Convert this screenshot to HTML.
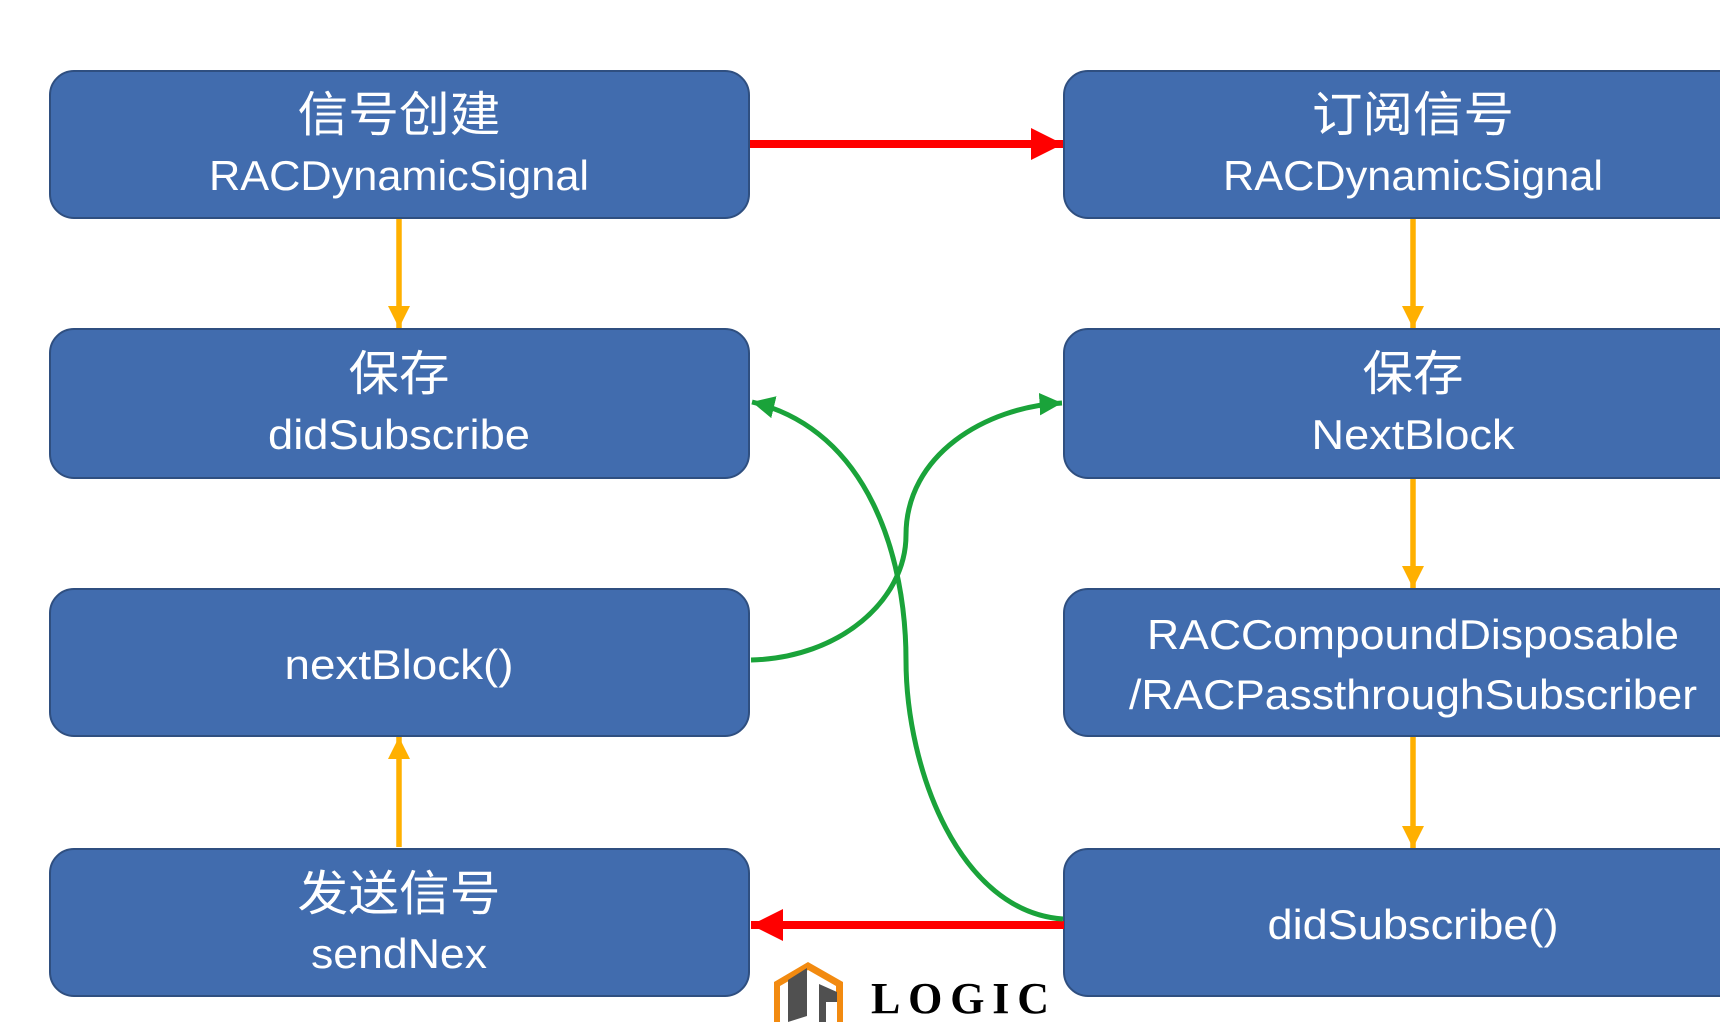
<!DOCTYPE html>
<html><head><meta charset="utf-8"><style>
html,body{margin:0;padding:0;background:#fff;width:1720px;height:1022px;overflow:hidden}
svg{display:block}
text{fill:#fff;font-family:"Liberation Sans","Noto Sans CJK SC",sans-serif;text-anchor:middle}
.c{font-size:48px}
.l{font-size:42px}
</style></head><body>
<svg width="1720" height="1022" viewBox="0 0 1720 1022" xmlns="http://www.w3.org/2000/svg">
<defs>
<marker id="ro" markerWidth="4" markerHeight="4" refX="4" refY="2" orient="auto" markerUnits="strokeWidth"><path d="M0,0 L4,2 L0,4 z" fill="#ff0000"/></marker>
<marker id="yo" markerWidth="4" markerHeight="4" refX="4" refY="2" orient="auto" markerUnits="strokeWidth"><path d="M0,0 L4,2 L0,4 z" fill="#ffb000"/></marker>
<marker id="go" markerWidth="4.5" markerHeight="4.5" refX="4.5" refY="2.25" orient="auto" markerUnits="strokeWidth"><path d="M0,0 L4.5,2.25 L0,4.5 z" fill="#1aa33a"/></marker>
</defs>
<g fill="#416cae" stroke="#2f4f80" stroke-width="2">
<rect x="50" y="71" width="699" height="147" rx="24"/>
<rect x="50" y="329" width="699" height="149" rx="24"/>
<rect x="50" y="589" width="699" height="147" rx="24"/>
<rect x="50" y="849" width="699" height="147" rx="24"/>
<rect x="1064" y="71" width="700" height="147" rx="24"/>
<rect x="1064" y="329" width="700" height="149" rx="24"/>
<rect x="1064" y="589" width="700" height="147" rx="24"/>
<rect x="1064" y="849" width="700" height="147" rx="24"/>
</g>
<line x1="750" y1="144" x2="1063" y2="144" stroke="#ff0000" stroke-width="8" marker-end="url(#ro)"/>
<line x1="1064" y1="925" x2="751" y2="925" stroke="#ff0000" stroke-width="8" marker-end="url(#ro)"/>
<g stroke="#ffb000" stroke-width="5.5">
<line x1="399" y1="219" x2="399" y2="328" marker-end="url(#yo)"/>
<line x1="1413" y1="219" x2="1413" y2="328" marker-end="url(#yo)"/>
<line x1="1413" y1="479" x2="1413" y2="588" marker-end="url(#yo)"/>
<line x1="1413" y1="737" x2="1413" y2="848" marker-end="url(#yo)"/>
<line x1="399" y1="847" x2="399" y2="737" marker-end="url(#yo)"/>
</g>
<g stroke="#1aa33a" stroke-width="5" fill="none">
<path d="M751,660 C840,658 906,600 906,535 C906,455 985,407 1062,403" marker-end="url(#go)"/>
<path d="M1063,919 C960,912 906,770 906,660 C906,560 870,430 752,402" marker-end="url(#go)"/>
</g>
<text class="c" x="399" y="131" textLength="203" lengthAdjust="spacingAndGlyphs">信号创建</text>
<text class="l" x="399" y="190" textLength="380" lengthAdjust="spacingAndGlyphs">RACDynamicSignal</text>
<text class="c" x="399" y="390" textLength="101" lengthAdjust="spacingAndGlyphs">保存</text>
<text class="l" x="399" y="449" textLength="262" lengthAdjust="spacingAndGlyphs">didSubscribe</text>
<text class="l" x="399" y="679" textLength="229" lengthAdjust="spacingAndGlyphs">nextBlock()</text>
<text class="c" x="399" y="910" textLength="203" lengthAdjust="spacingAndGlyphs">发送信号</text>
<text class="l" x="399" y="968" textLength="176" lengthAdjust="spacingAndGlyphs">sendNex</text>
<text class="c" x="1413" y="131" textLength="202" lengthAdjust="spacingAndGlyphs">订阅信号</text>
<text class="l" x="1413" y="190" textLength="380" lengthAdjust="spacingAndGlyphs">RACDynamicSignal</text>
<text class="c" x="1413" y="390" textLength="101" lengthAdjust="spacingAndGlyphs">保存</text>
<text class="l" x="1413" y="449" textLength="203" lengthAdjust="spacingAndGlyphs">NextBlock</text>
<text class="l" x="1413" y="649" textLength="532" lengthAdjust="spacingAndGlyphs">RACCompoundDisposable</text>
<text class="l" x="1413" y="709" textLength="568" lengthAdjust="spacingAndGlyphs">/RACPassthroughSubscriber</text>
<text class="l" x="1413" y="939" textLength="291" lengthAdjust="spacingAndGlyphs">didSubscribe()</text>
<path d="M774,982 L808,962 L843,982 L843,1022 L774,1022 Z" fill="#f28a10"/>
<path d="M780,986 L808,970 L836,986 L836,1022 L780,1022 Z" fill="#fff"/>
<path d="M788,980 L807,968 L807,1016 L788,1022 Z" fill="#505050"/>
<path d="M819,984 L837,992 L837,1022 L819,1022 Z" fill="#505050"/>
<path d="M826,1002 L837,1002 L837,1022 L826,1022 Z" fill="#fff"/>
<text x="960" y="1013" style="fill:#000;font-family:'Liberation Serif',serif;font-weight:bold;font-size:44px" textLength="178" lengthAdjust="spacing">LOGIC</text>
</svg>
</body></html>
